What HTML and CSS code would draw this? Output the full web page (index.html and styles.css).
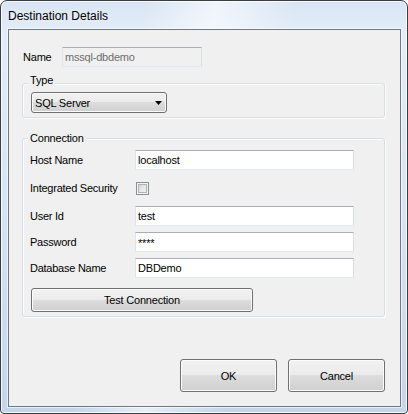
FILE: index.html
```html
<!DOCTYPE html>
<html lang="en">
<head>
<meta charset="utf-8">
<title>Destination Details</title>
<link rel="stylesheet" href="styles.css">
</head>
<body>
<div class="window">
  <div class="titlebar">Destination Details</div>
  <div class="client">
    <div class="name-row">
      <span class="name-label">Name</span>
      <div class="textbox readonly name-box">mssql-dbdemo</div>
    </div>

    <div class="group type-group">
      <div class="group-title">Type</div>
      <div class="combo">
        <span class="combo-text">SQL Server</span>
        <svg class="combo-arrow" width="7" height="4" viewBox="0 0 7 4"><path d="M0 0H7L3.5 4Z" fill="#000"/></svg>
      </div>
    </div>

    <div class="group conn-group">
      <div class="group-title">Connection</div>
      <div class="form">
        <span class="field-label">Host Name</span>
        <div class="textbox field-box">localhost</div>

        <span class="field-label">Integrated Security</span>
        <div class="check"></div>

        <span class="field-label">User Id</span>
        <div class="textbox field-box">test</div>

        <span class="field-label">Password</span>
        <div class="textbox field-box pw">****</div>

        <span class="field-label">Database Name</span>
        <div class="textbox field-box">DBDemo</div>
      </div>
      <button class="btn test-btn" type="button">Test Connection</button>
    </div>

    <div class="actions">
      <button class="btn dlg-btn" type="button">OK</button>
      <button class="btn dlg-btn" type="button">Cancel</button>
    </div>
  </div>
</div>
</body>
</html>
```
FILE: styles.css
```css
html, body {
  margin: 0;
  padding: 0;
}
body {
  width: 408px;
  height: 414px;
  overflow: hidden;
  background: #ffffff;
  font-family: "Liberation Sans", Arial, sans-serif;
  font-size: 11px;
  color: #000;
}
.window {
  box-sizing: border-box;
  width: 408px;
  height: 414px;
  border: 1px solid #3a3d42;
  border-radius: 7px 7px 4px 4px;
  padding: 0 6px 6px 7px;
  display: flex;
  flex-direction: column;
  background:
    linear-gradient(to right, rgba(120,165,220,0) 0, rgba(120,165,220,0.0) 2px, rgba(120,165,220,0) 6px),
    linear-gradient(100deg, rgba(255,255,255,0) 30%, rgba(255,255,255,0.6) 45%, rgba(255,255,255,0) 62%),
    linear-gradient(to bottom, #d8e5f4 0%, #e3edf9 8%, #d3e2f2 60%, #c4d6ea 100%);
  box-shadow: inset 0 0 0 1px rgba(255,255,255,0.8);
}
.titlebar {
  box-sizing: border-box;
  height: 28px;
  padding-top: 8px;
  font-size: 12px;
  line-height: 14px;
  color: #000;
  text-shadow: 0 0 6px rgba(255,255,255,0.9);
}
.client {
  flex: 1;
  box-sizing: border-box;
  border: 1px solid #6f7a86;
  background: #f0f0f0;
  padding: 17px 15px 0 13px;
  box-shadow: 0 0 0 1px rgba(255,255,255,0.6);
}
.name-row {
  display: flex;
  align-items: center;
  height: 20px;
  padding-left: 1px;
}
.name-label {
  width: 39px;
  letter-spacing: -0.2px;
}
.textbox {
  box-sizing: border-box;
  height: 20px;
  border: 1px solid;
  border-color: #abadb3 #dbdfe6 #e3e9ef #e2e3ea;
  background: #fff;
  padding: 0 2px;
  line-height: 18px;
  white-space: nowrap;
  letter-spacing: -0.2px;
}
.readonly {
  background: #f0f0f0;
  color: #6d6d6d;
}
.name-box {
  width: 140px;
}
.group {
  border: 1px solid #d5dfe5;
  border-radius: 3px;
  box-shadow: inset 1px 1px 0 #fcfcfc, 1px 1px 0 #fcfcfc;
}
.group-title {
  width: fit-content;
  padding: 0 2px;
  background: #f0f0f0;
  line-height: 13px;
  letter-spacing: -0.2px;
}
.type-group {
  margin-top: 16px;
  padding: 0 0 4px 8px;
}
.type-group .group-title {
  margin: -10px 0 0 -3px;
}
.combo {
  box-sizing: border-box;
  margin-top: 5px;
  width: 136px;
  height: 21px;
  border: 1px solid #707070;
  border-radius: 3px;
  background: linear-gradient(#f2f2f2 0%, #ebebeb 50%, #dddddd 50%, #cfcfcf 100%);
  box-shadow: inset 0 0 0 1px #fcfcfc;
  display: flex;
  align-items: center;
  padding: 0 4px 0 3px;
}
.combo-text {
  letter-spacing: -0.2px;
}
.combo-arrow {
  margin-left: auto;
}
.conn-group {
  margin-top: 20px;
  padding: 0 0 4px 7px;
}
.conn-group .group-title {
  margin: -7px 0 0 -2px;
}
.form {
  margin-top: 5px;
  display: grid;
  grid-template-columns: 105px 219px;
  grid-template-rows: 20px 24px 20px 20px 20px;
  row-gap: 6px;
  align-items: center;
}
.field-label {
  letter-spacing: -0.25px;
  white-space: nowrap;
}
.field-box {
  width: 219px;
}
.pw {
  line-height: 20px;
}
.check {
  box-sizing: border-box;
  width: 13px;
  height: 13px;
  margin-left: 1px;
  border: 1px solid #8e8f8f;
  background: linear-gradient(135deg, #c9cdd3 0%, #e6e8eb 55%, #f8f8f8 100%);
  box-shadow: inset 0 0 0 1px #f4f4f4, inset 0 0 0 2px #aeb3b9;
}
.btn {
  box-sizing: border-box;
  border: 1px solid #707070;
  border-radius: 3px;
  background: linear-gradient(#f2f2f2 0%, #ebebeb 50%, #dddddd 50%, #cfcfcf 100%);
  box-shadow: inset 0 0 0 1px #fcfcfc;
  font-family: inherit;
  font-size: 11px;
  color: #000;
  padding: 0;
  letter-spacing: -0.2px;
  cursor: default;
}
.test-btn {
  display: block;
  margin: 10px 0 0 1px;
  width: 222px;
  height: 24px;
}
.actions {
  margin-top: 42px;
  display: flex;
  justify-content: flex-end;
  gap: 11px;
}
.dlg-btn {
  width: 97px;
  height: 33px;
}
```
